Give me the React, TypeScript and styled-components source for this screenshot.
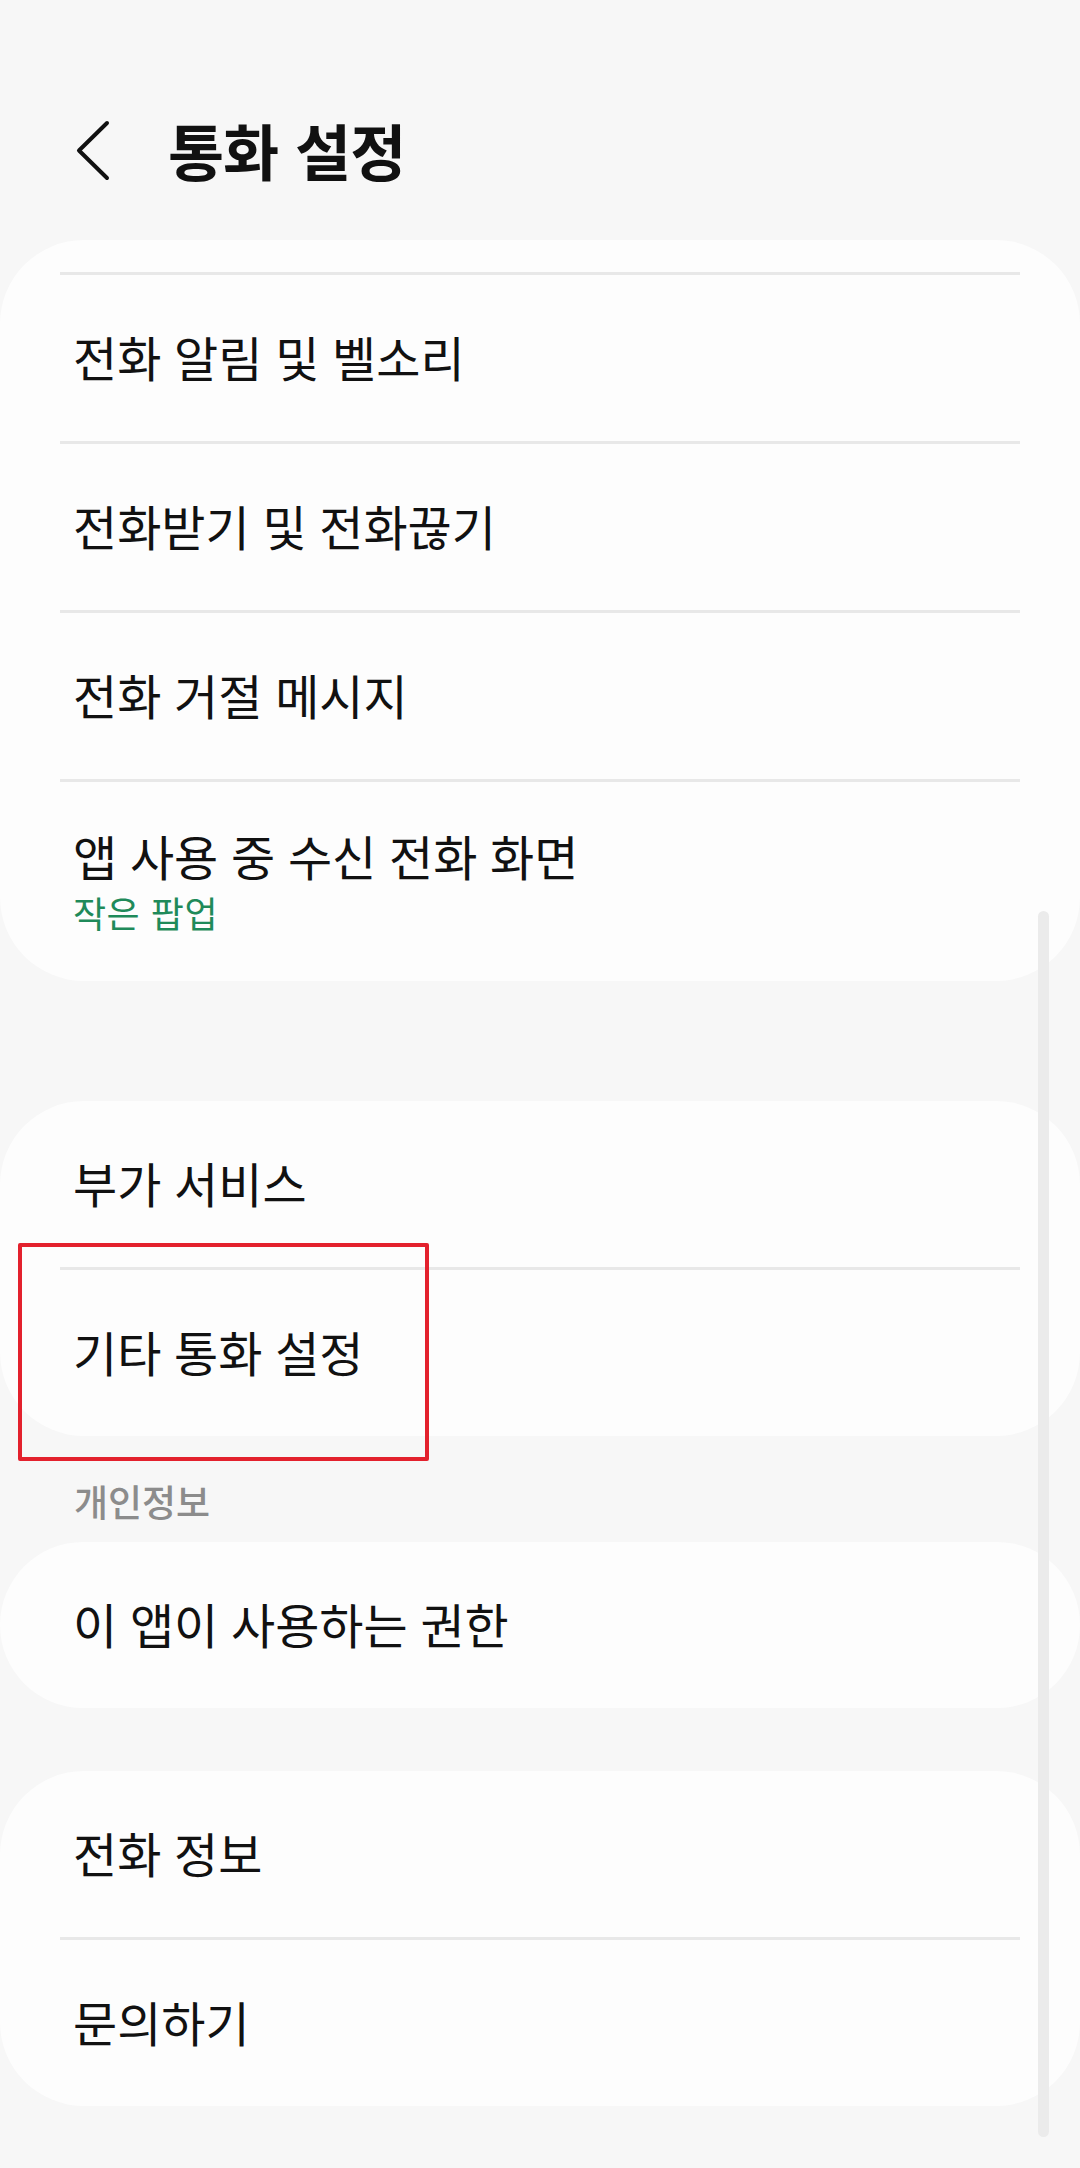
import React from "react";
import styled, { createGlobalStyle } from "styled-components";

const GlobalStyle = createGlobalStyle`
  html, body {
    margin: 0;
    padding: 0;
    background: #f7f7f7;
  }
  body {
    font-family: "Noto Sans CJK KR", "Noto Sans", sans-serif;
    color: #111;
  }
`;

const Page = styled.div`
  position: relative;
  width: 1080px;
  min-height: 2168px;
  overflow: hidden;
  background: #f7f7f7;
`;

const Header = styled.header`
  box-sizing: border-box;
  height: 240px;
  padding-top: 60px;
  display: flex;
  align-items: center;
`;

const BackButton = styled.button`
  margin-left: 73px;
  width: 40px;
  height: 61px;
  padding: 0;
  border: none;
  background: none;
  display: flex;
  cursor: pointer;
`;

const Title = styled.h1`
  margin: 0 0 0 55px;
  font-size: 61px;
  font-weight: 700;
  letter-spacing: -1px;
  word-spacing: 4px;
  line-height: 1.2;
  color: #111;
`;

const Card = styled.section<{ $gap?: number }>`
  position: relative;
  background: #fdfdfd;
  border-radius: 84px;
  margin-bottom: ${({ $gap }) => $gap ?? 0}px;
`;

const CardTop = styled.div`
  height: 32px;
`;

const Divider = styled.div`
  height: 3px;
  margin: 0 60px;
  background: #e8e8e8;
`;

const Row = styled.div<{ $height?: number }>`
  box-sizing: border-box;
  height: ${({ $height }) => $height ?? 166}px;
  padding: 0 73px 4px;
  display: flex;
  flex-direction: column;
  justify-content: center;
  gap: 6px;
  cursor: pointer;
`;

const RowTitle = styled.div`
  font-size: 48px;
  line-height: 60px;
  letter-spacing: 0;
  word-spacing: 2px;
  color: #111;
`;

const RowSub = styled.div`
  font-size: 36px;
  line-height: 43px;
  letter-spacing: 0.5px;
  word-spacing: 2px;
  color: #1f8a5a;
`;

const SectionLabel = styled.div`
  padding: 44px 74px 19px;
  font-size: 37px;
  line-height: 43px;
  font-weight: 500;
  letter-spacing: 0;
  color: #8c8c8c;
`;

const Highlight = styled.div`
  position: absolute;
  left: 18px;
  top: 142px;
  width: 411px;
  height: 218px;
  box-sizing: border-box;
  border: 4px solid #e3212d;
  border-radius: 2px;
  pointer-events: none;
`;

const ScrollThumb = styled.div`
  position: absolute;
  left: 1038px;
  top: 911px;
  width: 11px;
  height: 1226px;
  border-radius: 6px;
  background: #ebebeb;
`;

const ChevronLeft = () => (
  <svg width="40" height="61" viewBox="0 0 40 61" fill="none">
    <path
      d="M34 3 L6 30.5 L34 58"
      stroke="#111"
      strokeWidth="4"
      strokeLinecap="round"
      strokeLinejoin="round"
    />
  </svg>
);

type Item = { title: string; sub?: string };

const callItems: Item[] = [
  { title: "전화 알림 및 벨소리" },
  { title: "전화받기 및 전화끊기" },
  { title: "전화 거절 메시지" },
];

export default function App() {
  return (
    <>
      <GlobalStyle />
      <Page>
        <Header>
          <BackButton aria-label="뒤로">
            <ChevronLeft />
          </BackButton>
          <Title>통화 설정</Title>
        </Header>

        <Card $gap={120}>
          <CardTop />
          {callItems.map((item) => (
            <React.Fragment key={item.title}>
              <Divider />
              <Row>
                <RowTitle>{item.title}</RowTitle>
              </Row>
            </React.Fragment>
          ))}
          <Divider />
          <Row $height={199}>
            <RowTitle>앱 사용 중 수신 전화 화면</RowTitle>
            <RowSub>작은 팝업</RowSub>
          </Row>
        </Card>

        <Card>
          <Row>
            <RowTitle>부가 서비스</RowTitle>
          </Row>
          <Divider />
          <Row>
            <RowTitle>기타 통화 설정</RowTitle>
          </Row>
          <Highlight />
        </Card>

        <SectionLabel>개인정보</SectionLabel>

        <Card $gap={63}>
          <Row>
            <RowTitle>이 앱이 사용하는 권한</RowTitle>
          </Row>
        </Card>

        <Card>
          <Row>
            <RowTitle>전화 정보</RowTitle>
          </Row>
          <Divider />
          <Row>
            <RowTitle>문의하기</RowTitle>
          </Row>
        </Card>

        <ScrollThumb />
      </Page>
    </>
  );
}
